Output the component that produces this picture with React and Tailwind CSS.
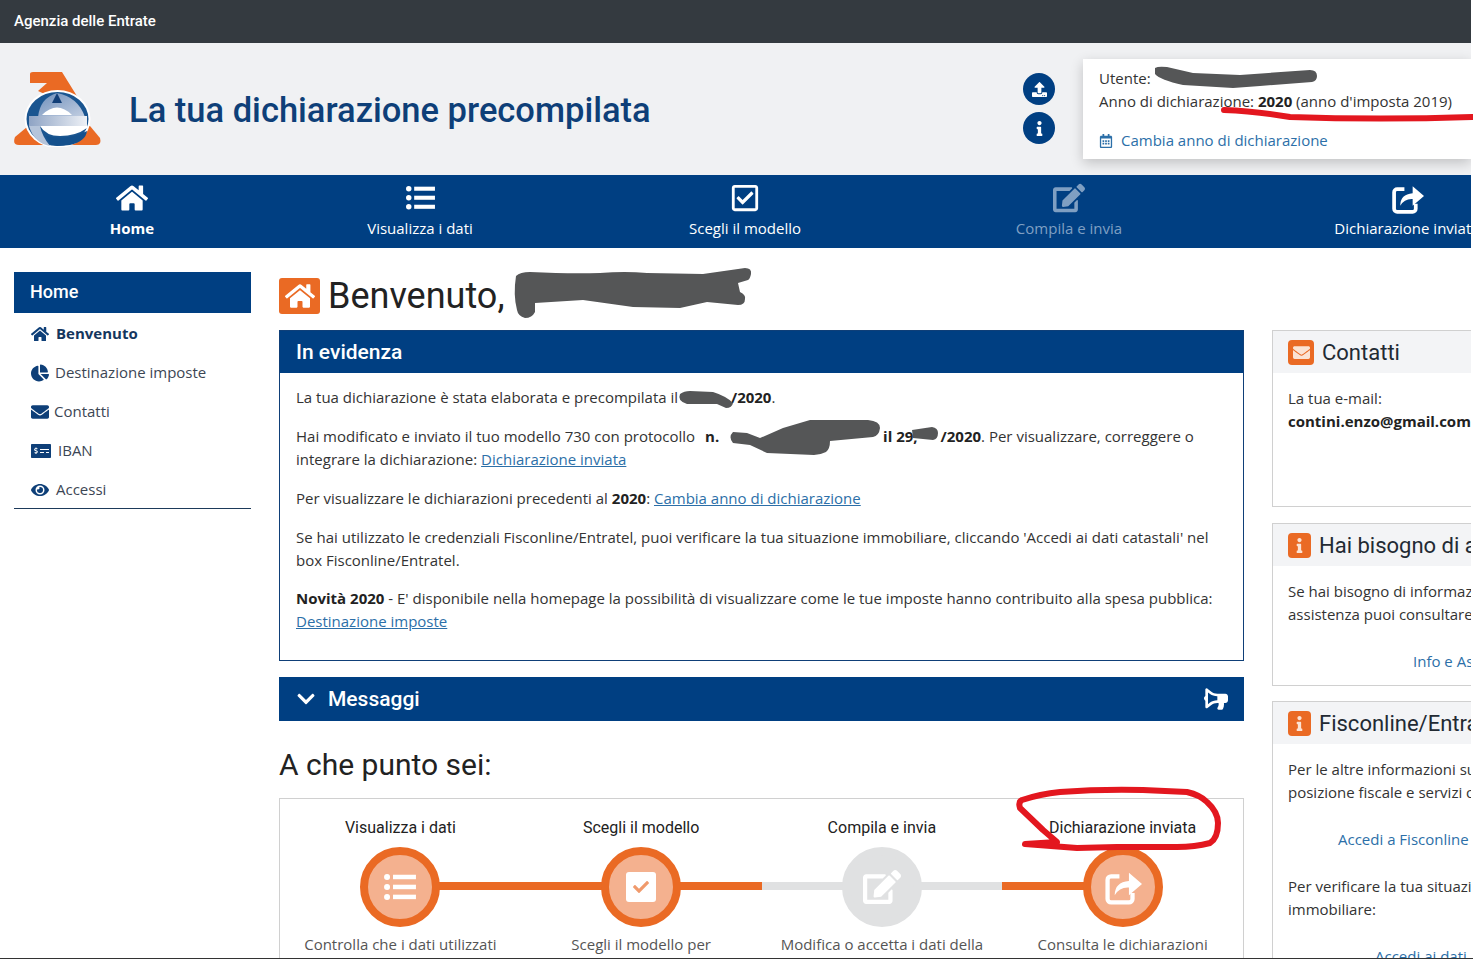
import React from 'react'
import {
  FaHome, FaRegCheckSquare, FaEdit, FaEnvelope, FaChartPie, FaMoneyCheckAlt,
  FaEye, FaInfo, FaUpload, FaRegCalendarAlt, FaBullhorn, FaChevronDown, FaCheck,
} from 'react-icons/fa'

const head = "font-['Roboto',sans-serif]"

// fa4 style list: small bullets, thick bars
const ListIcon = ({ size }) => (
  <svg width={size} height={size * 0.81} viewBox="0 0 32 26" fill="currentColor">
    <circle cx="3" cy="3" r="3" />
    <circle cx="3" cy="13" r="3" />
    <circle cx="3" cy="23" r="3" />
    <rect x="9" y="0.75" width="23" height="4.5" />
    <rect x="9" y="10.75" width="23" height="4.5" />
    <rect x="9" y="20.75" width="23" height="4.5" />
  </svg>
)

// fa4 share-square-o: open square with a solid arrow
const ShareIcon = ({ size }) => (
  <svg width={size} height={size} viewBox="0 0 32 32">
    <path d="M13 7 H6 a3 3 0 0 0 -3 3 V26 a3 3 0 0 0 3 3 H21 a3 3 0 0 0 3 -3 V21" fill="none" stroke="currentColor" strokeWidth="3.6" />
    <path d="M9 23 Q9 12 21 11 V4 L32 13.5 L21 23 V16.5 Q13 16 9 23 Z" fill="currentColor" />
  </svg>
)

const navItems = [
  { label: 'Home', icon: FaHome, size: 32, w: 'w-[264px]', bold: true },
  { label: 'Visualizza i dati', icon: ListIcon, size: 29, w: 'w-[312px]' },
  { label: 'Scegli il modello', icon: FaRegCheckSquare, size: 30, w: 'w-[338px]' },
  { label: 'Compila e invia', icon: FaEdit, size: 32, w: 'w-[310px]', off: true },
  { label: 'Dichiarazione inviata', icon: ShareIcon, size: 33, w: 'w-[366px]' },
]

const sideItems = [
  { label: 'Benvenuto', icon: FaHome, size: 18, active: true, gap: 'gap-[7px]' },
  { label: 'Destinazione imposte', icon: FaChartPie, size: 18, gap: 'gap-[6px]' },
  { label: 'Contatti', icon: FaEnvelope, size: 18, gap: 'gap-[5px]' },
  { label: 'IBAN', icon: FaMoneyCheckAlt, size: 20, gap: 'gap-[7px]' },
  { label: 'Accessi', icon: FaEye, size: 18, gap: 'gap-[7px]' },
]

const Logo = () => (
  <svg width="90" height="78" viewBox="13 68 90 78">
    <defs>
      <linearGradient id="eg" x1="0" x2="1">
        <stop offset="0" stopColor="#8ea3c4" />
        <stop offset="1" stopColor="#eef1f6" />
      </linearGradient>
      <linearGradient id="arch" x1="0" x2="1" y1="0" y2="1">
        <stop offset="0" stopColor="#6f8fbb" />
        <stop offset="1" stopColor="#c3cfe2" />
      </linearGradient>
    </defs>
    <path d="M30 73 Q30 71 33 71 H62 L80 100 H60 L38 90 L47 82 H30 Z" fill="#ea6a24" />
    <path d="M27 126 L15 136 Q12 144 19 144 H50 V126 Z" fill="#ea6a24" />
    <path d="M78 125 H90 L100 137 Q102 144 96 144 H70 Z" fill="#ea6a24" />
    <ellipse cx="57.5" cy="118" rx="33" ry="29" fill="#fff" />
    <ellipse cx="57.5" cy="118" rx="31" ry="27" fill="#1a5590" />
    <path d="M38 116 Q40 97 57 92 Q78 96 85 116 Z" fill="url(#arch)" />
    <path d="M57 92 L62 102 H52 Z" fill="#123f78" />
    <path d="M42 114 Q57 99 72 114 Z" fill="#fff" />
    <path d="M29 115 H87 V125 H29 Z" fill="url(#eg)" />
    <path d="M29 125 Q34 142 50 145 Q42 135 40 125 Z" fill="#b5c4da" />
    <path d="M40 125 Q46 135 60 135 Q76 135 87 127 V125 Z" fill="#fff" />
    <path d="M46 135 Q68 140 87 130 Q86 140 70 144 Q56 146 50 143 Z" fill="#14508c" />
  </svg>
)

const OrangeBadge = ({ icon: Icon, w = 'w-[26px]', size = 18 }) => (
  <span className={`${w} h-[25px] rounded-[4px] bg-[#ea6a24] flex items-center justify-center text-[#fbe3d4] shrink-0`}>
    <Icon size={size} />
  </span>
)

const SideCard = ({ icon, title, h, mb, badgeW, iconSize, children }) => (
  <div className={`${h} ${mb} border border-r-0 border-[#d0d0d0] overflow-hidden shrink-0`}>
    <div className="h-[42px] bg-[#f3f4f6] flex items-center gap-[8px] pl-[15px]">
      <OrangeBadge icon={icon} w={badgeW} size={iconSize} />
      <span className={`${head} text-[22px] text-[#222a33] whitespace-nowrap`}>{title}</span>
    </div>
    <div className="pl-[15px] pt-[14px] text-[#333] whitespace-nowrap">{children}</div>
  </div>
)

const steps = [
  { title: 'Visualizza i dati', text: 'Controlla che i dati utilizzati', icon: ListIcon, size: 32, right: 'bg-[#ea6a24]' },
  { title: 'Scegli il modello', text: 'Scegli il modello per', left: 'bg-[#ea6a24]', right: 'bg-[#ea6a24]', check: true },
  { title: 'Compila e invia', text: 'Modifica o accetta i dati della', icon: FaEdit, size: 38, left: 'bg-[#e0e1e2]', right: 'bg-[#e0e1e2]', off: true },
  { title: 'Dichiarazione inviata', text: 'Consulta le dichiarazioni', icon: ShareIcon, size: 38, left: 'bg-[#ea6a24]' },
]

const Step = ({ step }) => {
  const Icon = step.icon
  return (
    <div className="relative flex flex-col items-center pt-[18px] whitespace-nowrap">
      <div className={`${head} text-[16px] leading-[22px] text-[#222]`}>{step.title}</div>
      {step.left && <div className={`absolute left-0 right-1/2 top-[83px] h-[8px] ${step.left}`} />}
      {step.right && <div className={`absolute left-1/2 right-0 top-[83px] h-[8px] ${step.right}`} />}
      <div className={`relative mt-[8px] w-[80px] h-[80px] rounded-full border-[8px] flex items-center justify-center text-white ${step.off ? 'border-[#e0e1e2] bg-[#e0e1e2]' : 'border-[#ea6a24] bg-[#f4b18f]'}`}>
        {step.check ? (
          <span className="w-[30px] h-[30px] rounded-[3px] bg-white flex items-center justify-center text-[#f09a6c]"><FaCheck size={16} /></span>
        ) : (
          <Icon size={step.size} />
        )}
      </div>
      <div className="mt-[6px] text-[#555]">{step.text}</div>
    </div>
  )
}

export default function App() {
  return (
    <div className="relative w-[1473px] h-[959px] overflow-hidden bg-white font-['Open_Sans',sans-serif] text-[15px] leading-[23px] text-[#333]">
      <div className="w-[1471px] h-[958px] overflow-hidden">
        <div className="h-[43px] bg-[#343a40] flex items-center pl-[14px]">
          <span className={`${head} text-white text-[15px] font-medium`}>Agenzia delle Entrate</span>
        </div>

        <header className="h-[132px] bg-[#f0f1f3] flex items-center">
          <div className="ml-[13px] w-[90px] h-[78px] mt-[-3px]"><Logo /></div>
          <h1 className={`${head} ml-[26px] mt-[2px] text-[34.5px] text-[#0e3f78] font-medium`}>La tua dichiarazione precompilata</h1>
          <div className="ml-auto mr-[28px] flex flex-col gap-[7px] mt-[-1px]">
            <span className="w-[32px] h-[32px] rounded-full bg-[#003f82] text-white flex items-center justify-center"><FaUpload size={15} /></span>
            <span className="w-[32px] h-[32px] rounded-full bg-[#003f82] text-white flex items-center justify-center"><FaInfo size={15} /></span>
          </div>
          <div className="w-[388px] h-[100px] bg-white shadow-[0_4px_12px_rgba(0,0,0,0.2)] pl-[16px] pt-[8px] whitespace-nowrap">
            <div>Utente:</div>
            <div>Anno di dichiarazione: <b className="text-[#222]">2020</b> (anno d'imposta 2019)</div>
            <div className="mt-[16px] flex items-center gap-[8px] text-[#2c6fa8]"><FaRegCalendarAlt size={14} />Cambia anno di dichiarazione</div>
          </div>
        </header>

        <nav className="h-[73px] bg-[#003f82] flex overflow-hidden">
          {navItems.map((n) => (
            <div key={n.label} className={`${n.w} shrink-0 flex flex-col items-center whitespace-nowrap ${n.off ? 'text-[#7f9fc2]' : 'text-white'}`}>
              <div className="h-[42px] flex items-center pt-[4px]"><n.icon size={n.size} /></div>
              <span className={`${n.bold ? 'font-bold' : ''}`}>{n.label}</span>
            </div>
          ))}
        </nav>

        <div className="flex pt-[24px]">
          <aside className="ml-[14px] w-[237px] shrink-0 self-start border-b border-[#1d3a5a]">
            <div className={`${head} h-[41px] bg-[#003f82] text-white text-[18px] font-medium flex items-center pl-[16px] pb-[2px]`}>Home</div>
            <ul>
              {sideItems.map((s) => (
                <li key={s.label} className={`h-[39px] flex items-center pl-[17px] pt-[2px] ${s.gap} ${s.active ? 'font-bold text-[#14365e]' : 'text-[#3c4654]'}`}>
                  <s.icon size={s.size} className="text-[#0e3f78]" />
                  {s.label}
                </li>
              ))}
            </ul>
          </aside>

          <main className="ml-[28px] w-[965px] shrink-0">
            <div className="h-[58px] flex items-start gap-[8px] pt-[5px]">
              <span className="w-[41px] h-[36px] rounded-[3px] bg-[#ea6a24] text-white flex items-center justify-center mt-[1px]"><FaHome size={30} /></span>
              <span className={`${head} text-[36px] leading-[38px] text-[#222]`}>Benvenuto,</span>
            </div>

            <section className="h-[331px] border border-[#0f3f78]">
              <div className={`${head} h-[42px] bg-[#003f82] text-white text-[21px] font-medium flex items-center pl-[16px]`}>In evidenza</div>
              <div className="px-[16px] pt-[13px] flex flex-col gap-[16px]">
                <p>La tua dichiarazione è stata elaborata e precompilata il <span className="ml-[49px]"><b className="text-[#222]">/2020</b>.</span></p>
                <p>Hai modificato e inviato il tuo modello 730 con protocollo <b className="text-[#222] ml-[6px]">n.</b> <b className="text-[#222] ml-[160px]">il 29,</b><b className="text-[#222] ml-[23px]">/2020</b>. Per visualizzare, correggere o integrare la dichiarazione: <a className="text-[#2c6fa8] underline">Dichiarazione inviata</a></p>
                <p>Per visualizzare le dichiarazioni precedenti al <b className="text-[#222]">2020</b>: <a className="text-[#2c6fa8] underline">Cambia anno di dichiarazione</a></p>
                <p>Se hai utilizzato le credenziali Fisconline/Entratel, puoi verificare la tua situazione immobiliare, cliccando 'Accedi ai dati catastali' nel box Fisconline/Entratel.</p>
                <p className="mt-[-1px]"><b className="text-[#222]">Novità 2020</b> - E' disponibile nella homepage la possibilità di visualizzare come le tue imposte hanno contribuito alla spesa pubblica: <a className="text-[#2c6fa8] underline">Destinazione imposte</a></p>
              </div>
            </section>

            <div className={`${head} mt-[16px] h-[44px] bg-[#003f82] text-white flex items-center pl-[17px] pr-[16px]`}>
              <FaChevronDown size={20} />
              <span className="ml-[12px] text-[21px] font-medium">Messaggi</span>
              <FaBullhorn size={24} className="ml-auto -scale-x-100" />
            </div>

            <h2 className={`${head} mt-[23px] text-[30px] leading-[42px] text-[#222]`}>A che punto sei:</h2>

            <div className="mt-[12px] h-[170px] border border-[#d0d0d0] grid grid-cols-4">
              {steps.map((s) => <Step key={s.title} step={s} />)}
            </div>
          </main>

          <aside className="ml-[28px] flex-1 min-w-0 pt-[58px] flex flex-col">
            <SideCard icon={FaEnvelope} title="Contatti" h="h-[177px]" mb="mb-[16px]" badgeW="w-[26px]" iconSize={17}>
              <div>La tua e-mail:</div>
              <b className="text-[#222]">contini.enzo@gmail.com</b>
            </SideCard>
            <SideCard icon={FaInfo} title="Hai bisogno di aiuto?" h="h-[163px]" mb="mb-[15px]" badgeW="w-[23px]" iconSize={15}>
              <div>Se hai bisogno di informazioni o</div>
              <div>assistenza puoi consultare</div>
              <a className="block mt-[24px] pl-[125px] text-[#2c6fa8]">Info e Assistenza</a>
            </SideCard>
            <SideCard icon={FaInfo} title="Fisconline/Entratel" h="h-[300px]" mb="" badgeW="w-[23px]" iconSize={15}>
              <div>Per le altre informazioni sulla</div>
              <div>posizione fiscale e servizi on line</div>
              <a className="block mt-[24px] pl-[50px] text-[#2c6fa8]">Accedi a Fisconline</a>
              <div className="mt-[24px]">Per verificare la tua situazione</div>
              <div>immobiliare:</div>
              <a className="block mt-[24px] pl-[87px] text-[#2c6fa8]">Accedi ai dati</a>
            </SideCard>
          </aside>
        </div>
      </div>
      <div className="absolute left-0 right-0 bottom-0 h-px bg-[#333]" />

      {/* pen marks drawn over the screenshot */}
      <svg className="absolute inset-0 pointer-events-none" width="1473" height="959" viewBox="0 0 1473 959" fill="none" strokeLinecap="round" strokeLinejoin="round">
        <g fill="#555657">
          <path d="M516 276 Q520 272 530 272 Q570 274 600 273 Q625 271 647 273 L703 274 L745 268 Q752 268 751 274 Q750 279 748 280 L738 283 L740 292 Q746 295 745 299 Q745 305 738 305 L707 302 L680 308 L633 307 L583 300 L535 303 L535 312 Q532 318 525 318 Q518 316 517 310 Q513 295 516 276 Z" />
          <path d="M680 394 Q684 391 690 391 L713 392 Q726 396 733 403 Q732 408 726 408 L717 404 L687 404 Q677 401 680 394 Z" />
          <path d="M733 432 L747 433 L760 438 L783 428 L810 420 L868 420 Q880 421 880 428 Q879 436 873 437 L830 441 Q830 449 826 452 Q820 455 814 455 L767 453 L750 445 L733 443 Q728 437 733 432 Z" />
          <path d="M912 430 L932 427 Q938 428 938 433 Q938 439 933 440 L913 438 Z" />
          <path d="M1155 68 Q1158 66 1167 67 L1193 73 L1240 75 L1310 70 Q1317 70 1317 76 Q1317 81 1312 82 L1260 86 L1233 88 L1183 85 Q1160 80 1155 74 Z" />
        </g>
        <g stroke="#e3171f">
          <path d="M1224 110 Q1255 111 1290 117 Q1380 120 1472 117" strokeWidth="6" />
          <path d="M1025 844 L1057 842 L1043 830 L1020 808 Q1018 802 1022 800 Q1040 794 1060 792 Q1100 789 1143 790 L1187 792 Q1200 795 1207 802 Q1218 812 1218 823 Q1218 838 1210 843 Q1195 847 1177 847 L1117 847 L1077 848 Z" strokeWidth="6" />
        </g>
      </svg>
    </div>
  )
}
